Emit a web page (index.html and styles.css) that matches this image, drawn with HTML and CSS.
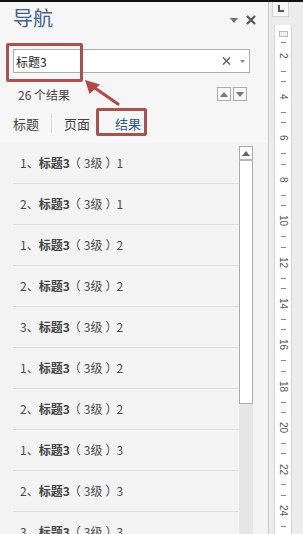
FILE: index.html
```html
<!DOCTYPE html>
<html lang="zh">
<head>
<meta charset="utf-8">
<link rel="stylesheet" href="styles.css">
</head>
<body>
<div class="app">
  <div class="pane">
    <div class="header">
      <div class="title">导航</div>
      <div class="hctrl">
        <svg width="8" height="5" viewBox="0 0 8 5"><path d="M0 0H8L4 5Z" fill="#6f6f6f"/></svg>
        <svg width="10" height="10" viewBox="0 0 10 10"><path d="M1 1L9 9M9 1L1 9" stroke="#555" stroke-width="2.2"/></svg>
      </div>
    </div>
    <div class="search">
      <span class="stext">标题3</span>
      <svg class="sx" width="9" height="8" viewBox="0 0 9 8"><path d="M1 0.5L8 7.5M8 0.5L1 7.5" stroke="#666" stroke-width="1.6"/></svg>
      <svg class="sdd" width="5" height="3" viewBox="0 0 5 3"><path d="M0 0H5L2.5 3Z" fill="#888"/></svg>
    </div>
    <div class="results">
      <span>26 个结果</span>
      <div class="navbtns">
        <span class="nb"><svg width="8" height="5" viewBox="0 0 8 5"><path d="M0 5H8L4 0Z" fill="#777"/></svg></span>
        <span class="nb"><svg width="8" height="5" viewBox="0 0 8 5"><path d="M0 0H8L4 5Z" fill="#777"/></svg></span>
      </div>
    </div>
    <div class="tabs">
      <span class="tab">标题</span>
      <span class="tsep"></span>
      <span class="tab">页面</span>
      <span class="tab active">结果</span>
    </div>
    <div class="listwrap">
      <div class="list">
        <div class="row">1、<b>标题3</b><span class="lp">（</span>3级<span class="rp">）</span>1</div>
        <div class="row">2、<b>标题3</b><span class="lp">（</span>3级<span class="rp">）</span>1</div>
        <div class="row">1、<b>标题3</b><span class="lp">（</span>3级<span class="rp">）</span>2</div>
        <div class="row">2、<b>标题3</b><span class="lp">（</span>3级<span class="rp">）</span>2</div>
        <div class="row">3、<b>标题3</b><span class="lp">（</span>3级<span class="rp">）</span>2</div>
        <div class="row">1、<b>标题3</b><span class="lp">（</span>3级<span class="rp">）</span>2</div>
        <div class="row">2、<b>标题3</b><span class="lp">（</span>3级<span class="rp">）</span>2</div>
        <div class="row">1、<b>标题3</b><span class="lp">（</span>3级<span class="rp">）</span>3</div>
        <div class="row">2、<b>标题3</b><span class="lp">（</span>3级<span class="rp">）</span>3</div>
        <div class="row">3、<b>标题3</b><span class="lp">（</span>3级<span class="rp">）</span>3</div>
      </div>
      <div class="scroll">
        <div class="sbtn"><svg width="8" height="5" viewBox="0 0 8 5"><path d="M0 5H8L4 0Z" fill="#666"/></svg></div>
        <div class="thumb"></div>
        <div class="track"></div>
      </div>
    </div>
    <div class="mark mark-search"></div>
    <div class="mark mark-tab"></div>
    <svg class="arrow" width="40" height="30" viewBox="0 0 40 30">
      <path d="M36 27L10 9" stroke="#b24a47" stroke-width="3.2" stroke-linecap="round"/>
      <path d="M3 3L18 7.5L7.5 17Z" fill="#b24a47"/>
    </svg>
  </div>
  <div class="ruler">
    <div class="corner"><span class="lglyph"></span></div>
    <div class="rstrip">
      <div class="indent"></div>
      <div class="tick t0"></div>
      <div class="cell"><span class="num">2</span></div>
      <div class="tick"></div><div class="tick"></div>
      <div class="cell"><span class="num">4</span></div>
      <div class="tick"></div><div class="tick"></div>
      <div class="cell"><span class="num">6</span></div>
      <div class="tick"></div><div class="tick"></div>
      <div class="cell"><span class="num">8</span></div>
      <div class="tick"></div><div class="tick"></div>
      <div class="cell"><span class="num">10</span></div>
      <div class="tick"></div><div class="tick"></div>
      <div class="cell"><span class="num">12</span></div>
      <div class="tick"></div><div class="tick"></div>
      <div class="cell"><span class="num">14</span></div>
      <div class="tick"></div><div class="tick"></div>
      <div class="cell"><span class="num">16</span></div>
      <div class="tick"></div><div class="tick"></div>
      <div class="cell"><span class="num">18</span></div>
      <div class="tick"></div><div class="tick"></div>
      <div class="cell"><span class="num">20</span></div>
      <div class="tick"></div><div class="tick"></div>
      <div class="cell"><span class="num">22</span></div>
      <div class="tick"></div><div class="tick"></div>
      <div class="cell"><span class="num">24</span></div>
      <div class="tick"></div>
    </div>
  </div>
</div>
</body>
</html>
```
FILE: styles.css
```css
* { box-sizing: border-box; }
html, body { margin: 0; padding: 0; }
body {
  width: 303px; height: 534px; overflow: hidden;
  background: #f4f4f4;
  font-family: "Noto Sans CJK SC", "Noto Sans", sans-serif;
  color: #444;
}
.app {
  display: flex;
  height: 534px;
  border-top: 2px solid #111;
}
.pane {
  position: relative;
  width: 268px;
  flex: none;
  background: #f6f6f6;
  display: flex;
  flex-direction: column;
}
.header {
  height: 47px;
  display: flex;
  justify-content: space-between;
  align-items: flex-start;
  padding: 3px 13px 0 13px;
}
.title {
  font-size: 20px;
  line-height: 26px;
  color: #45628a;
}
.hctrl {
  display: flex;
  align-items: center;
  gap: 8px;
  margin-top: 10px;
  margin-right: -1px;
}
.search {
  margin-left: 13px;
  width: 237px;
  height: 24px;
  border: 1px solid #adadad;
  background: #fff;
  display: flex;
  align-items: center;
  padding-left: 2px;
  font-size: 12px;
  color: #222;
}
.stext { flex: 1; }
.sx { margin-right: 9px; }
.sdd { margin-right: 4px; }
.results {
  margin-top: 12px;
  height: 18px;
  display: flex;
  align-items: center;
  justify-content: space-between;
  padding-left: 18px;
  padding-right: 21px;
  font-size: 12px;
}
.navbtns { display: flex; gap: 2px; }
.nb {
  width: 14px; height: 14px;
  border: 1px solid #aaa;
  background: #f8f8f8;
  display: flex; align-items: center; justify-content: center;
}
.tabs {
  margin-top: 7px;
  height: 26px;
  display: flex;
  align-items: center;
  padding-left: 13px;
  font-size: 13px;
}
.tab { color: #444; }
.tsep {
  width: 1px; height: 20px;
  background: #dadada;
  margin: 0 12px;
}
.tab.active {
  color: #2d5688;
  margin-left: 25px;
}
.listwrap {
  margin-top: 7px;
  display: flex;
  flex: 1;
  overflow: hidden;
  padding-left: 13px;
  background: #f3f3f3;
}
.list {
  width: 226px;
  flex: none;
}
.row {
  height: 41px;
  border-bottom: 1px solid #dedede;
  padding-left: 7px;
  padding-bottom: 2px;
  display: flex;
  align-items: center;
  font-size: 12px;
  color: #4a4a4a;
  white-space: pre;
}
.row b { font-weight: 700; color: #444; }
.lp { margin-left: -1px; margin-right: 3px; }
.rp { margin-left: 3px; margin-right: -1px; }
.scroll {
  width: 14px;
  margin-top: 3px;
  display: flex;
  flex-direction: column;
}
.sbtn {
  height: 15px;
  background: #fff;
  border: 1px solid #ababab;
  border-bottom: 2px solid #b5b5b5;
  display: flex; align-items: center; justify-content: center;
}
.thumb {
  height: 243px;
  background: #fff;
  border: 1px solid #ababab;
  border-top: none;
}
.track {
  flex: 1;
  background: #e6e6e6;
}
.mark {
  position: absolute;
  border: 3px solid #a8514f;
  border-radius: 2px;
}
.mark-search { left: 6px; top: 41px; width: 77px; height: 39px; }
.mark-tab { left: 96px; top: 106px; width: 51px; height: 28px; }
.arrow { position: absolute; left: 82px; top: 75px; }
.ruler {
  flex: 1;
  background: #ececec;
  border-left: 1px solid #c9c9c9;
  padding-left: 5px;
  display: flex;
  flex-direction: column;
}
.corner {
  width: 17px;
  height: 15px;
  margin-left: -2px;
  background: #f6f6f6;
  border: 1px solid #d4d4d4;
  border-top: none;
  position: relative;
}
.lglyph {
  position: absolute;
  left: 5px; top: 3px;
  width: 6px; height: 7px;
  border-left: 2px solid #555;
  border-bottom: 2px solid #555;
}
.rstrip {
  margin-top: 8px;
  width: 18px;
  flex: 1;
  background: #fff;
  border-left: 1px solid #d6d6d6;
  border-right: 1px solid #d6d6d6;
  display: flex;
  flex-direction: column;
  align-items: center;
}
.indent {
  width: 9px; height: 6px;
  margin-top: 6px;
  border: 1px solid #bbb;
  background: #f0f0f0;
}
.tick {
  width: 5px; height: 10.35px;
  position: relative;
  flex: none;
}
.tick::after {
  content: "";
  position: absolute;
  left: 0; right: 0; top: 5px;
  height: 1px;
  background: #888;
}
.t0 { height: 8px; }
.cell {
  height: 20.7px;
  flex: none;
  display: flex;
  align-items: center;
  justify-content: center;
}
.num {
  writing-mode: vertical-rl;
  font-family: "Liberation Sans", "DejaVu Sans", sans-serif;
  font-size: 10px;
  color: #555;
  line-height: 10px;
}
```
